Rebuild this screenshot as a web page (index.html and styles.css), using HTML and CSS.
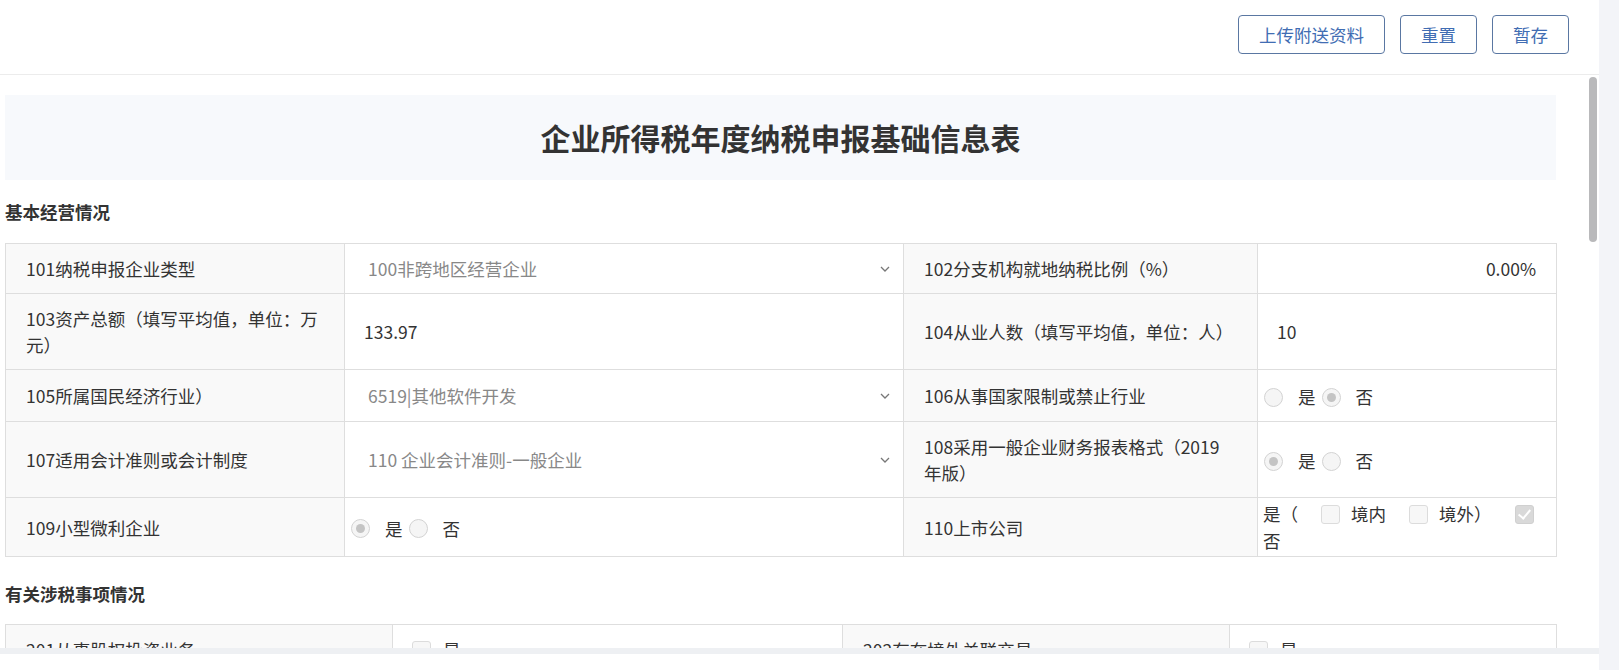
FILE: index.html
```html
<!DOCTYPE html>
<html lang="zh-CN">
<head>
	<meta charset="UTF-8">
	<title>企业所得税年度纳税申报基础信息表</title>
	<link rel="stylesheet" href="styles.css">
</head>
<body>
	<div class="panel">
		<div class="toolbar">
			<button class="btn">上传附送资料</button>
			<button class="btn">重置</button>
			<button class="btn">暂存</button>
		</div>

		<div class="main">
			<div class="content">
				<h1 class="title">企业所得税年度纳税申报基础信息表</h1>

				<h2 class="sub">基本经营情况</h2>
				<table class="form basic">
					<colgroup>
						<col class="c1"><col class="c2"><col class="c3"><col class="c4">
					</colgroup>
					<tr>
						<td class="lb">101纳税申报企业类型</td>
						<td class="sel"><div class="select"><span>100非跨地区经营企业</span><svg viewBox="0 0 10 6"><path d="M1 1l4 4 4-4"/></svg></div></td>
						<td class="lb">102分支机构就地纳税比例（%）</td>
						<td class="num">0.00%</td>
					</tr>
					<tr>
						<td class="lb">103资产总额（填写平均值，单位：万元）</td>
						<td class="val">133.97</td>
						<td class="lb">104从业人数（填写平均值，单位：人）</td>
						<td class="val">10</td>
					</tr>
					<tr>
						<td class="lb">105所属国民经济行业）</td>
						<td class="sel"><div class="select"><span>6519|其他软件开发</span><svg viewBox="0 0 10 6"><path d="M1 1l4 4 4-4"/></svg></div></td>
						<td class="lb">106从事国家限制或禁止行业</td>
						<td class="opts"><label class="radio"><i></i>是</label><label class="radio on"><i></i>否</label></td>
					</tr>
					<tr>
						<td class="lb">107适用会计准则或会计制度</td>
						<td class="sel"><div class="select"><span>110 企业会计准则-一般企业</span><svg viewBox="0 0 10 6"><path d="M1 1l4 4 4-4"/></svg></div></td>
						<td class="lb">108采用一般企业财务报表格式（2019年版）</td>
						<td class="opts"><label class="radio on"><i></i>是</label><label class="radio"><i></i>否</label></td>
					</tr>
					<tr>
						<td class="lb">109小型微利企业</td>
						<td class="opts"><label class="radio on"><i></i>是</label><label class="radio"><i></i>否</label></td>
						<td class="lb">110上市公司</td>
						<td class="listed">是（<label class="check"><i></i>境内</label><label class="check"><i></i>境外）</label><label class="check on"><i></i></label>否</td>
					</tr>
				</table>

				<h2 class="sub second">有关涉税事项情况</h2>
				<table class="form matters">
					<colgroup>
						<col class="c1"><col class="c2"><col class="c3"><col class="c4">
					</colgroup>
					<tr>
						<td class="lb">201从事股权投资业务</td>
						<td class="val"><label class="check"><i></i>是</label></td>
						<td class="lb">202存在境外关联交易</td>
						<td class="val"><label class="check"><i></i>是</label></td>
					</tr>
					<tr>
						<td class="lb">203-1选择采用的境外所得抵免方式</td>
						<td class="sel"><div class="select"><span></span><svg viewBox="0 0 10 6"><path d="M1 1l4 4 4-4"/></svg></div></td>
						<td class="lb">203-2新增境外直接投资信息</td>
						<td class="val"><label class="check"><i></i>是</label></td>
					</tr>
					<tr>
						<td class="lb">204有限合伙制创业投资企业的法人合伙人</td>
						<td class="val"><label class="check"><i></i>是</label></td>
						<td class="lb">205创业投资企业</td>
						<td class="val"><label class="check"><i></i>是</label></td>
					</tr>
					<tr>
						<td class="lb">206技术先进型服务企业类型</td>
						<td class="sel"><div class="select"><span></span><svg viewBox="0 0 10 6"><path d="M1 1l4 4 4-4"/></svg></div></td>
						<td class="lb">207非营利组织</td>
						<td class="val"><label class="check"><i></i>是</label></td>
					</tr>
					<tr>
						<td class="lb">208软件、集成电路企业类型</td>
						<td class="sel"><div class="select"><span></span><svg viewBox="0 0 10 6"><path d="M1 1l4 4 4-4"/></svg></div></td>
						<td class="lb">209集成电路生产项目类型</td>
						<td class="val"><label class="check"><i></i>130纳米</label></td>
					</tr>
					<tr>
						<td class="lb">210科技型中小企业</td>
						<td class="val"><label class="check"><i></i>是</label></td>
						<td class="lb">211高新技术企业申报所属期年度有效的高新技术企业证书</td>
						<td class="val"><label class="check"><i></i>是</label></td>
					</tr>
					<tr>
						<td class="lb">212重组事项税务处理方式</td>
						<td class="sel"><div class="select"><span></span><svg viewBox="0 0 10 6"><path d="M1 1l4 4 4-4"/></svg></div></td>
						<td class="lb">213重组交易类型</td>
						<td class="sel"><div class="select"><span></span><svg viewBox="0 0 10 6"><path d="M1 1l4 4 4-4"/></svg></div></td>
					</tr>
				</table>
			</div>
			<div class="thumb"></div>
		</div>

		<div class="footer"></div>
	</div>
</body>
</html>
```

FILE: styles.css
```css
*{
	margin: 0;
	padding: 0;
	box-sizing: border-box;
}
html,body{
	height: 100%;
}
body{
	display: flex;
	overflow: hidden;
	background: #f3f4f8;
	font-family: "Noto Sans CJK SC", "Microsoft YaHei", sans-serif;
	font-size: 17.5px;
	color: #333;
}
.panel{
	width: 1599px;
	height: 670px;
	background: #fff;
	display: flex;
	flex-direction: column;
}

/* 顶部按钮 */
.toolbar{
	height: 75px;
	border-bottom: 1px solid #ececec;
	display: flex;
	justify-content: flex-end;
	align-items: flex-start;
	gap: 15px;
	padding: 15px 30px 0 0;
	flex-shrink: 0;
}
.btn{
	height: 39px;
	padding: 0 20px;
	border: 1px solid #5a77a2;
	border-radius: 4px;
	background: #fff;
	color: #416db3;
	font-family: inherit;
	font-size: 17.5px;
	line-height: 37px;
	cursor: pointer;
}

/* 滚动区域，滚动条自己画 */
.main{
	flex: 1;
	position: relative;
	overflow: hidden;
	padding-right: 10px;
}
.thumb{
	position: absolute;
	top: 2px;
	right: 2px;
	width: 8px;
	height: 165px;
	border-radius: 4px;
	background: #b9b9bb;
}
.footer{
	height: 22px;
	flex-shrink: 0;
	border-top: 6px solid #eef0f3;
}
.content{
	padding: 20px 33px 40px 5px;
}

.title{
	height: 85px;
	line-height: 85px;
	background: #f7f9fc;
	text-align: center;
	font-size: 30px;
	font-weight: bold;
	color: #333;
}
.sub{
	font-size: 17.5px;
	font-weight: bold;
	line-height: 26px;
	padding: 19px 0 18px;
	color: #333;
}
.sub.second{
	padding-top: 24px;
	padding-bottom: 17px;
}

/* 表格 */
.form{
	width: 100%;
	border-collapse: collapse;
	table-layout: fixed;
	line-height: 26px;
}
.form td{
	border: 1px solid #dedede;
	padding: 12px 20px 11px;
	vertical-align: middle;
}
.form .lb{
	background: #f9f9f9;
}
.basic .lb{
	padding-right: 15px;
}
.basic td:nth-child(3){
	padding-right: 27px;
}
.basic .c1{ width: 339px; }
.basic .c2{ width: 559px; }
.basic .c3{ width: 354px; }
.basic .c4{ width: 299px; }
.matters .c1{ width: 387px; }
.matters .c2{ width: 450px; }
.matters .c3{ width: 387px; }
.matters .c4{ width: 327px; }

.form .val{
	padding-left: 19px;
}
.form .num{
	text-align: right;
}
.form .sel{
	padding-right: 13px;
}
.select{
	display: flex;
	justify-content: space-between;
	align-items: center;
	padding-left: 3px;
	color: #888;
	min-height: 26px;
}
.select svg{
	width: 10px;
	height: 6px;
	fill: none;
	stroke: #777;
	stroke-width: 1.3;
}
.form .opts{
	padding-left: 6px;
}
.form .listed{
	padding: 2px 5px;
	line-height: 27px;
}

/* 单选 */
.radio{
	display: inline-flex;
	align-items: center;
	margin-right: 6px;
	vertical-align: middle;
}
.radio i{
	position: relative;
	width: 19px;
	height: 19px;
	margin-right: 15px;
	border: 1px solid #d3d3d3;
	border-radius: 50%;
	background: #f5f5f5;
}
.radio.on i::after{
	content: "";
	position: absolute;
	left: 4px;
	top: 4px;
	width: 9px;
	height: 9px;
	border-radius: 50%;
	background: #c4c4c4;
}

/* 复选 */
.check i{
	position: relative;
	display: inline-block;
	width: 19px;
	height: 19px;
	margin-right: 12px;
	border: 1px solid #dcdcdc;
	border-radius: 3px;
	background: #f7f7f7;
	vertical-align: -3px;
}
.listed .check i{
	margin: 0 11px 0 23px;
}
.check.on i{
	background: #d9d9d9;
	border-color: #d0d0d0;
}
.check.on i::after{
	content: "";
	position: absolute;
	left: 5px;
	top: 1px;
	width: 5px;
	height: 10px;
	border: solid #fff;
	border-width: 0 2px 2px 0;
	transform: rotate(40deg);
}
```
